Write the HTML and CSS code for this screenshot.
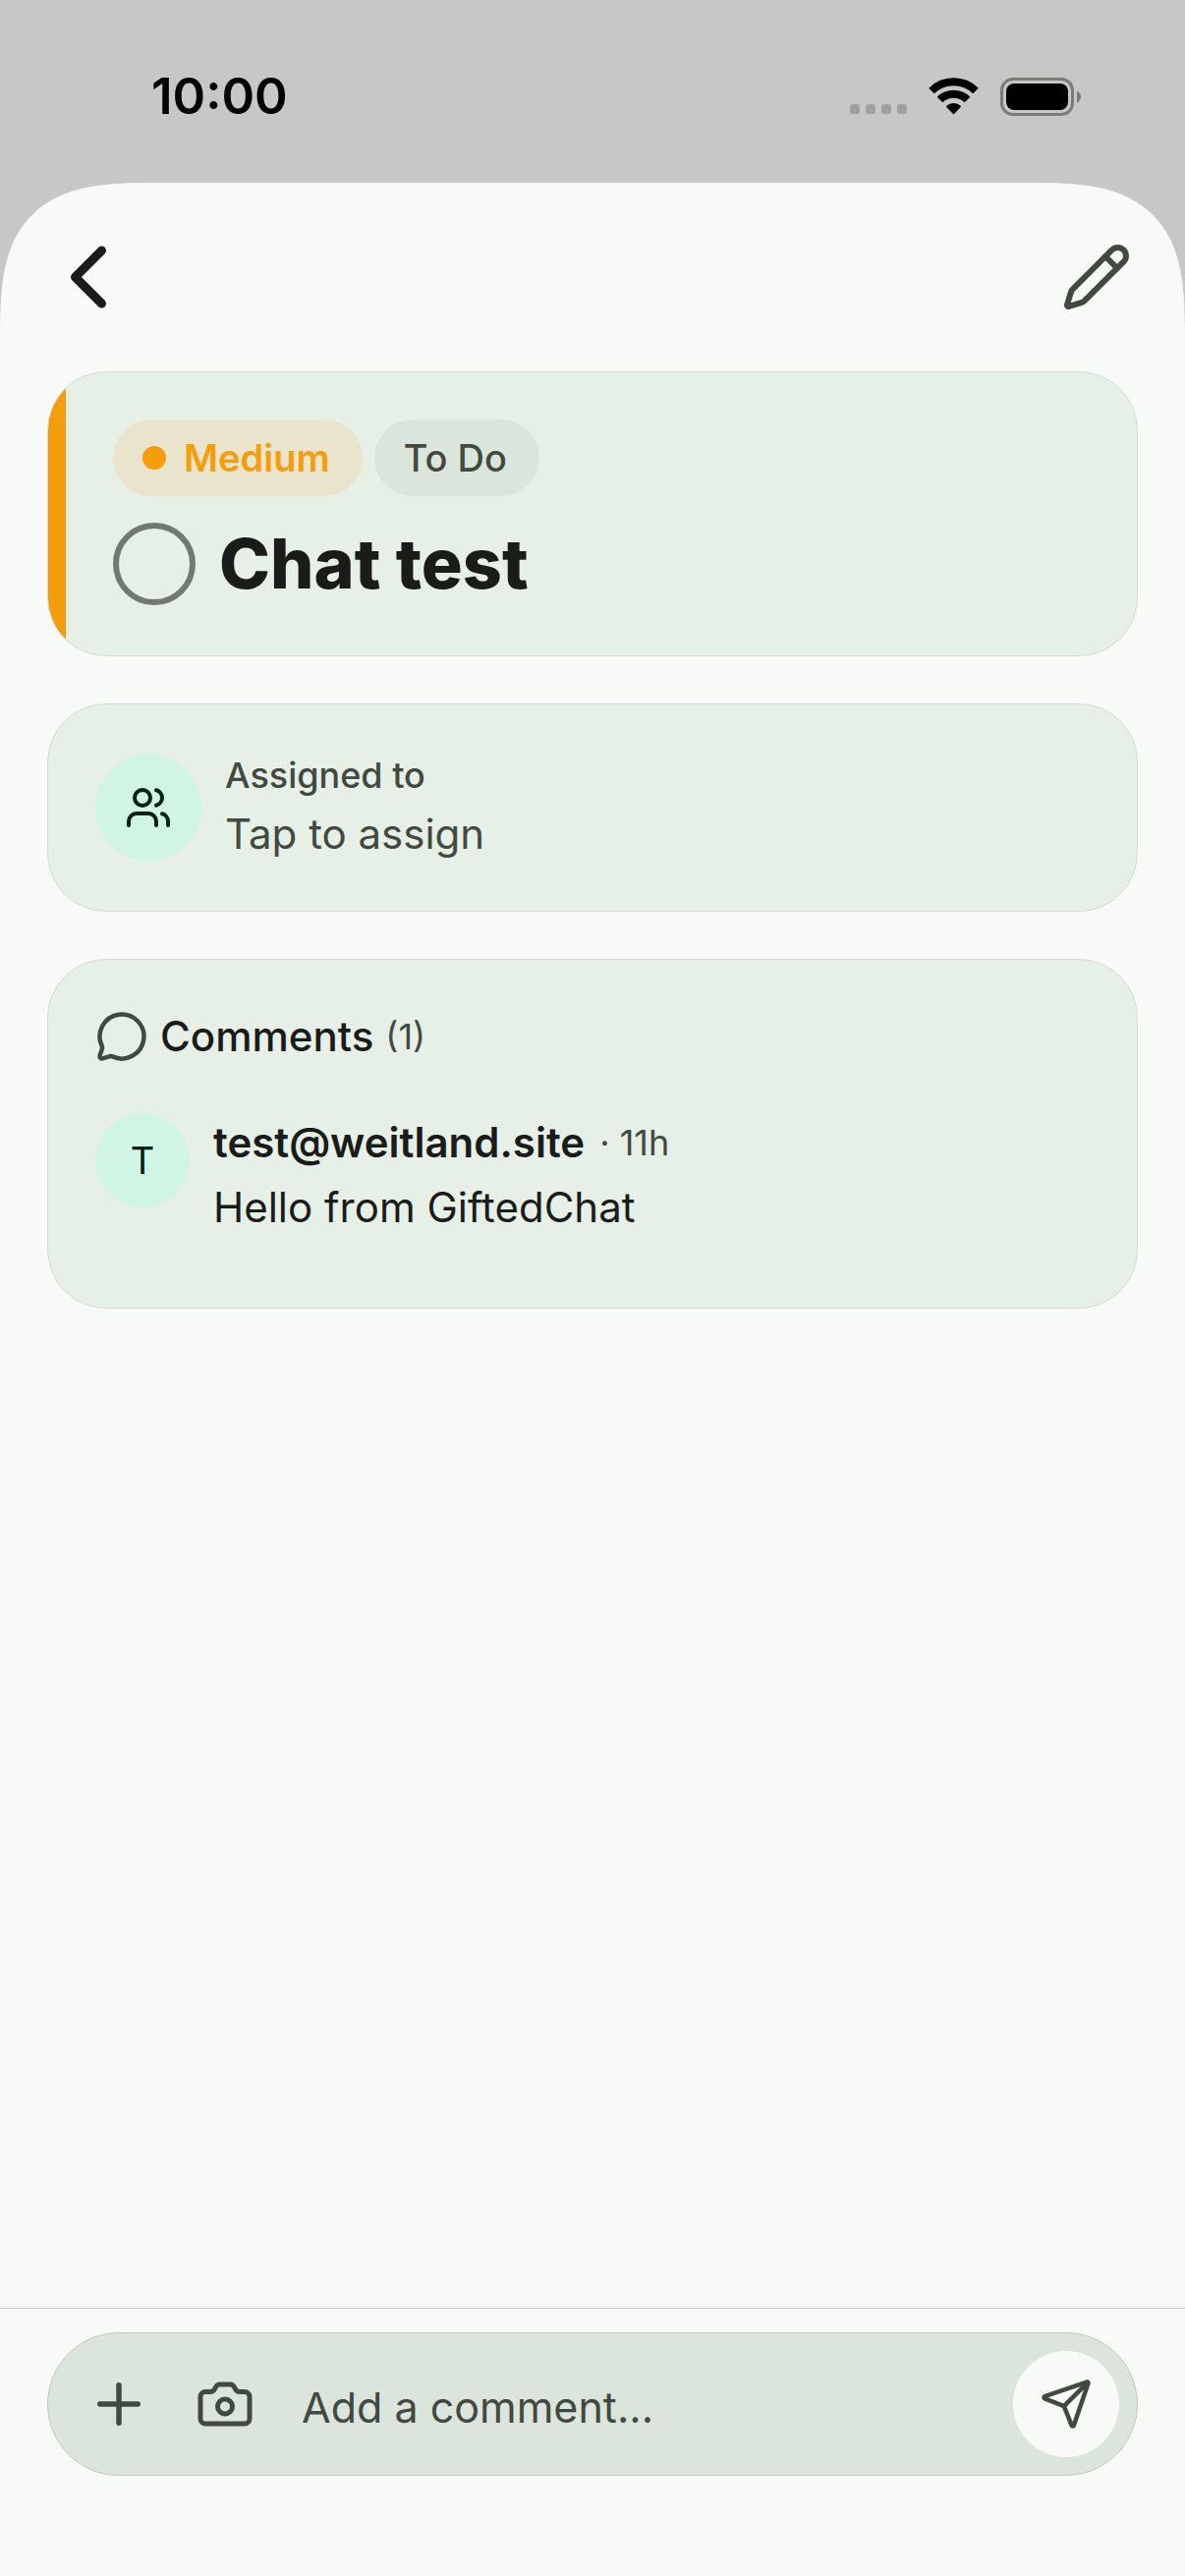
FILE: index.html
```html
<!DOCTYPE html>
<html lang="en">
<head>
    <meta charset="UTF-8">
    <meta name="viewport" content="width=device-width, initial-scale=1.0">
    <title>Chat test</title>
    <link rel="stylesheet" href="styles.css">
</head>
<body>
    <header class="status-bar">
        <time class="clock">10:00</time>
        <div class="status-icons">
            <svg class="signal" viewBox="0 0 58 38" aria-hidden="true">
                <rect x="0" y="27" width="10" height="10" rx="3"/>
                <rect x="16" y="27" width="10" height="10" rx="3"/>
                <rect x="32" y="27" width="10" height="10" rx="3"/>
                <rect x="48" y="27" width="10" height="10" rx="3"/>
            </svg>
            <svg class="wifi" viewBox="0 0 51 38" aria-hidden="true">
                <path class="arc" d="M3 13.5A32 32 0 0 1 48 13.5"/>
                <path class="arc" d="M11.5 22.5A20 20 0 0 1 39.5 22.5"/>
                <path d="M25.5 37.5L18 29.8Q18 29 19 28.2A10.5 10.5 0 0 1 32 28.2Q33 29 33 29.8Z"/>
            </svg>
            <svg class="battery" viewBox="0 0 83 39" aria-hidden="true">
                <rect class="shell" x="1.5" y="1.5" width="72" height="36" rx="11.5"/>
                <rect x="6" y="6" width="63" height="27" rx="8"/>
                <path class="cap" d="M78 13.5Q82 15.5 82 19.5T78 25.5Z"/>
            </svg>
        </div>
    </header>

    <main class="sheet">
        <nav class="toolbar">
            <button class="icon-button back" aria-label="Back">
                <svg viewBox="0 0 24 24"><path d="m15 18-6-6 6-6"/></svg>
            </button>
            <button class="icon-button edit" aria-label="Edit">
                <svg viewBox="0 0 24 24"><path d="M21.174 6.812a1 1 0 0 0-3.986-3.987L3.842 16.174a2 2 0 0 0-.5.83l-1.321 4.352a.5.5 0 0 0 .623.622l4.353-1.32a2 2 0 0 0 .83-.497z"/><path d="m15 5 4 4"/></svg>
            </button>
        </nav>

        <div class="content">
            <section class="card task">
                <div class="chips">
                    <span class="chip priority">Medium</span>
                    <span class="chip">To Do</span>
                </div>
                <div class="title-row">
                    <input type="checkbox" class="done" id="done">
                    <label for="done"><h1>Chat test</h1></label>
                </div>
            </section>

            <button class="card assignee">
                <span class="badge">
                    <svg viewBox="0 0 24 24"><path d="M16 21v-2a4 4 0 0 0-4-4H6a4 4 0 0 0-4 4v2"/><path d="M16 3.128a4 4 0 0 1 0 7.744"/><path d="M22 21v-2a4 4 0 0 0-3-3.87"/><circle cx="9" cy="7" r="4"/></svg>
                </span>
                <span class="assignee-text">
                    <span class="caption">Assigned to</span>
                    <span class="value">Tap to assign</span>
                </span>
            </button>

            <section class="card comments">
                <div class="comments-head">
                    <svg viewBox="0 0 24 24" aria-hidden="true"><path d="M2.992 16.342a2 2 0 0 1 .094 1.167l-1.065 3.29a1 1 0 0 0 1.236 1.168l3.413-.998a2 2 0 0 1 1.099.092 10 10 0 1 0-4.777-4.719"/></svg>
                    <h2>Comments</h2>
                    <span class="count">(1)</span>
                </div>
                <article class="comment">
                    <span class="avatar">T</span>
                    <div class="comment-body">
                        <div class="comment-meta">
                            <strong>test@weitland.site</strong>
                            <span class="age">· 11h</span>
                        </div>
                        <p>Hello from GiftedChat</p>
                    </div>
                </article>
            </section>
        </div>

        <footer class="composer">
            <form class="composer-box">
                <button type="button" class="tool plus" aria-label="Add attachment">
                    <svg viewBox="0 0 24 24"><path d="M5 12h14"/><path d="M12 5v14"/></svg>
                </button>
                <button type="button" class="tool camera" aria-label="Take photo">
                    <svg viewBox="0 0 24 24"><path d="M13.997 4a2 2 0 0 1 1.76 1.05l.486.9A2 2 0 0 0 18.003 7H20a2 2 0 0 1 2 2v9a2 2 0 0 1-2 2H4a2 2 0 0 1-2-2V9a2 2 0 0 1 2-2h1.997a2 2 0 0 0 1.759-1.048l.489-.904A2 2 0 0 1 10.004 4z"/><circle cx="12" cy="13" r="3"/></svg>
                </button>
                <input type="text" class="message" aria-label="Comment" placeholder="Add a comment...">
                <button class="tool send" aria-label="Send">
                    <svg viewBox="0 0 24 24"><path d="M14.536 21.686a.5.5 0 0 0 .937-.024l6.5-19a.496.496 0 0 0-.635-.635l-19 6.5a.5.5 0 0 0-.024.937l7.93 3.18a2 2 0 0 1 1.112 1.11z"/><path d="m21.854 2.147-10.94 10.939"/></svg>
                </button>
            </form>
        </footer>
    </main>
</body>
</html>
```

FILE: styles.css
```css
* {
    box-sizing: border-box;
}
body {
    margin: 0;
    min-height: 100vh;
    display: flex;
    flex-direction: column;
    background-color: #c6c8c5;
    color: #1a1c19;
    font-family: Inter, sans-serif;
    font-size: 42px;
    line-height: 60px;
}
h1, h2, p {
    margin: 0;
}
button {
    border: none;
    padding: 0;
    background: none;
    color: inherit;
    font: inherit;
    text-align: left;
    cursor: pointer;
}
svg {
    display: block;
    fill: none;
    stroke: currentColor;
    stroke-width: 2;
    stroke-linecap: round;
    stroke-linejoin: round;
}

/* status bar */
.status-bar {
    display: flex;
    justify-content: space-between;
    align-items: center;
    height: 186px;
    padding: 10px 105px 0 154px;
    color: #000;
}
.clock {
    font-size: 51px;
    font-weight: 600;
}
.status-icons {
    display: flex;
    align-items: center;
    gap: 22px;
}
.status-icons svg {
    fill: #000;
    stroke: none;
}
.status-icons .signal {
    width: 58px;
    fill: #9fa19e;
}
.status-icons .wifi {
    width: 51px;
}
.status-icons .arc {
    fill: none;
    stroke: #000;
    stroke-width: 8;
    stroke-linecap: butt;
}
.status-icons .battery {
    width: 83px;
}
.battery .shell {
    fill: none;
    stroke: #7b7c7a;
    stroke-width: 3;
}
.battery .cap {
    fill: #7b7c7a;
}

/* sheet */
.sheet {
    flex: 1;
    display: flex;
    flex-direction: column;
    background-color: #f8faf7;
    border-radius: 112px 112px 0 0;
}
@supports (corner-shape: superellipse(1.6)) {
    .sheet {
        border-radius: 160px 160px 0 0;
        corner-shape: superellipse(1.6);
    }
}
.toolbar {
    display: flex;
    justify-content: space-between;
    align-items: center;
    padding: 42px 36px;
}
.icon-button {
    display: grid;
    place-items: center;
    width: 108px;
    height: 108px;
}
.back svg {
    width: 108px;
}
.edit {
    color: #424940;
}
.edit svg {
    width: 72px;
}
.content {
    flex: 1;
    display: flex;
    flex-direction: column;
    gap: 48px;
    padding: 0 48px 48px;
}

/* cards */
.card {
    background-color: #e6f0e6;
    border: 1px solid #d3dcd3;
    border-radius: 60px;
    padding: 48px;
}
.task {
    display: flex;
    flex-direction: column;
    gap: 24px;
    overflow: hidden;
    background-image: linear-gradient(#f59e0b, #f59e0b);
    background-size: 18px 100%;
    background-repeat: no-repeat;
    padding-left: 66px;
}
.chips {
    display: flex;
    gap: 12px;
}
.chip {
    display: flex;
    align-items: center;
    gap: 18px;
    padding: 15px 33px 15px 30px;
    border-radius: 39px;
    background-color: #dbe5dc;
    color: #424940;
    font-size: 38px;
    font-weight: 500;
    line-height: 48px;
}
.priority {
    background-color: #e9e4cb;
    color: #f59e0b;
    font-weight: 600;
}
.priority::before {
    content: "";
    width: 24px;
    height: 24px;
    border-radius: 50%;
    background-color: #f59e0b;
}
.title-row {
    display: flex;
    align-items: center;
    gap: 24px;
}
.done {
    appearance: none;
    width: 84px;
    height: 84px;
    margin: 0;
    border: 6px solid #727970;
    border-radius: 50%;
}
.title-row h1 {
    font-size: 70px;
    font-weight: 800;
    line-height: 90px;
}

/* assignee */
.assignee {
    display: flex;
    align-items: center;
    gap: 24px;
    color: #424940;
}
.badge {
    display: grid;
    place-items: center;
    width: 108px;
    height: 108px;
    border-radius: 50%;
    background-color: #d0f5e4;
    color: #002114;
}
.badge svg {
    width: 48px;
}
.assignee-text {
    display: flex;
    flex-direction: column;
    gap: 6px;
}
.caption {
    font-size: 36px;
    font-weight: 500;
    line-height: 48px;
}

/* comments */
.comments {
    display: flex;
    flex-direction: column;
    gap: 48px;
}
.comments-head {
    display: flex;
    align-items: center;
    gap: 12px;
}
.comments-head svg {
    width: 54px;
    color: #424940;
}
.comments-head h2 {
    font-size: 42px;
    font-weight: 500;
}
.count,
.age {
    color: #424940;
    font-size: 36px;
}
.comment {
    display: flex;
    align-items: flex-start;
    gap: 24px;
    padding-bottom: 24px;
}
.avatar {
    display: grid;
    place-items: center;
    width: 96px;
    height: 96px;
    border-radius: 50%;
    background-color: #d0f5e4;
    color: #002114;
    font-size: 38px;
}
.comment-body {
    display: flex;
    flex-direction: column;
    gap: 6px;
}
.comment-meta {
    display: flex;
    align-items: center;
    gap: 15px;
}
.comment-meta strong {
    font-weight: 600;
}

/* composer */
.composer {
    border-top: 1px solid #c2c8c1;
    padding: 24px 48px 102px;
}
.composer-box {
    display: flex;
    align-items: center;
    padding: 18px;
    border: 1px solid #c2c8c1;
    border-radius: 73px;
    background-color: #dbe5dc;
    color: #424940;
}
.tool {
    display: grid;
    place-items: center;
    width: 108px;
    height: 108px;
    border-radius: 50%;
}
.plus svg {
    width: 66px;
}
.camera svg {
    width: 60px;
}
.send {
    background-color: #f8faf7;
}
.send svg {
    width: 54px;
}
.message {
    flex: 1;
    min-width: 0;
    border: none;
    padding: 6px 24px 0;
    background: none;
    color: inherit;
    font: inherit;
    font-size: 43px;
}
.message::placeholder {
    color: #424940;
    opacity: 1;
}
```
